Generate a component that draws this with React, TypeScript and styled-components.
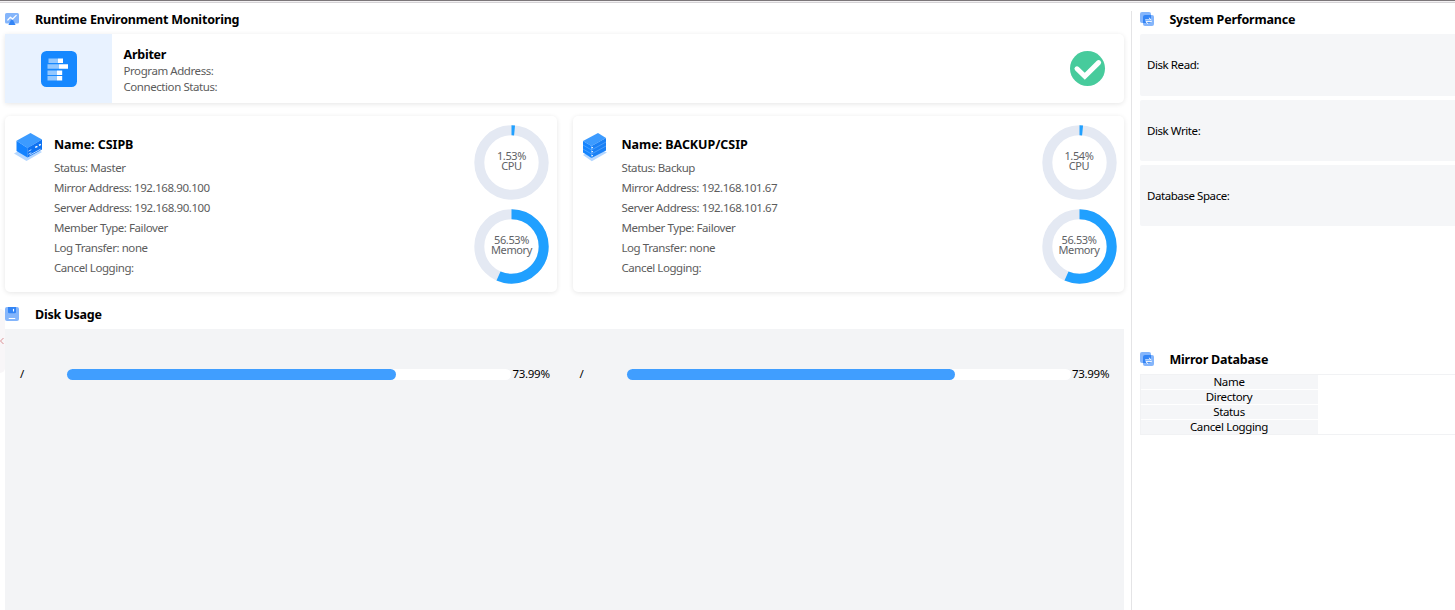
import React from 'react';
import styled, { createGlobalStyle } from 'styled-components';

const GlobalStyle = createGlobalStyle`
  * { box-sizing: border-box; }
  body {
    margin: 0;
    overflow: hidden;
    background: #fff;
    color: #000;
    font-family: "Noto Sans", "Open Sans", sans-serif;
    font-size: 11.5px;
  }
`;

const Page = styled.div`
  position: relative;
  display: flex;
  flex-direction: column;
  height: 610px;
  overflow: hidden;
`;

const TopEdge = styled.div`
  flex: none;
  height: 3px;
  background: linear-gradient(#7b7679 0 1px, #f3f1f3 1px 2px, #d5d3d6 2px 3px);
`;

const Columns = styled.div`
  flex: 1;
  display: flex;
  padding-top: 8px;
`;

const MainColumn = styled.main`
  width: 1131px;
  padding: 0 7px 0 5px;
  display: flex;
  flex-direction: column;
`;

const SideColumn = styled.aside`
  flex: 1;
  border-left: 1px solid #e4e4e6;
  padding-left: 8px;
`;

const SectionTitle = styled.h2<{ $above?: number; $below?: number; $gap?: number }>`
  flex: none;
  display: flex;
  align-items: center;
  gap: ${(p) => p.$gap ?? 16}px;
  padding: ${(p) => p.$above ?? 0}px 0 ${(p) => p.$below ?? 0}px;
  margin: 0;
  font-size: 12.5px;
  line-height: 17px;
  font-weight: 700;
  letter-spacing: -0.2px;
  white-space: nowrap;
  svg { flex: none; display: block; margin-bottom: 1px; }
`;

const Card = styled.section`
  display: flex;
  background: #fff;
  border-radius: 5px;
  box-shadow: 0 1px 5px rgba(0, 0, 0, 0.1);
`;

const ArbiterCard = styled(Card)`
  flex: none;
  height: 69px;
  margin-bottom: 13px;
  align-items: center;
  border-radius: 0 5px 5px 0;
`;

const ArbiterBadge = styled.div`
  width: 107px;
  height: 69px;
  display: flex;
  align-items: center;
  justify-content: center;
  background: #e8f2ff;
`;

const ArbiterInfo = styled.div`
  flex: 1;
  padding: 4px 0 0 11.5px;
  line-height: 16px;
  color: #5c5c5c;
  letter-spacing: -0.43px;
`;

const ArbiterName = styled.div`
  font-size: 12.5px;
  line-height: 17px;
  font-weight: 700;
  letter-spacing: -0.25px;
  color: #000;
`;

const StatusMark = styled.div`
  margin-right: 18px;
  height: 36px;
  svg { display: block; }
`;

const Members = styled.div`
  flex: none;
  display: grid;
  grid-template-columns: 551.5px 551.5px;
  gap: 16px;
  height: 176px;
`;

const MemberIcon = styled.div`
  flex: none;
  width: 49px;
  padding: 15px 0 0 9px;
  svg { display: block; }
`;

const MemberInfo = styled.div`
  flex: 1;
  padding-top: 18px;
  line-height: 20px;
  color: #5c5c5c;
  letter-spacing: -0.43px;
  white-space: nowrap;
`;

const MemberName = styled.div`
  height: 24px;
  line-height: 21px;
  font-size: 12.5px;
  font-weight: 700;
  letter-spacing: -0.05px;
  color: #000;
`;

const Gauges = styled.div`
  flex: none;
  width: 75px;
  margin-right: 7.5px;
  padding-top: 9px;
  display: flex;
  flex-direction: column;
  gap: 9px;
`;

const GaugeFrame = styled.div`
  display: grid;
  width: 75px;
  height: 75px;
  > * { grid-area: 1 / 1; }
  svg { display: block; }
`;

const GaugeLabel = styled.div`
  align-self: center;
  padding-bottom: 4px;
  text-align: center;
  line-height: 10px;
  font-size: 11px;
  letter-spacing: -0.38px;
  color: #606266;
  white-space: nowrap;
`;

const DiskPanel = styled.section`
  flex: 1;
  display: grid;
  grid-template-columns: 559.5px 559.5px;
  align-content: start;
  padding-top: 37px;
  background: #f3f4f6;
`;

const DiskRow = styled.div`
  display: flex;
  align-items: center;
  height: 16px;
  padding-left: 15px;
`;

const DiskPath = styled.span`
  width: 47px;
  padding-bottom: 1px;
`;

const Track = styled.div`
  width: 444px;
  height: 11px;
  border-radius: 6px;
  background: #fff;
`;

const Fill = styled.div`
  height: 100%;
  border-radius: 6px;
  background: #409eff;
`;

const Percent = styled.span`
  margin-left: 1.5px;
  padding-bottom: 2px;
  letter-spacing: -0.3px;
`;

const MetricList = styled.div`
  display: grid;
  grid-template-rows: 62px 61px 61px;
  gap: 4px;
`;

const Metric = styled.div`
  display: flex;
  align-items: center;
  padding: 0 0 1px 7px;
  border-radius: 2px 0 0 2px;
  background: #f5f6f8;
  letter-spacing: -0.43px;
`;

const MirrorSection = styled.section`
  padding-top: 125px;
`;

const MirrorTable = styled.div`
  border: 1px solid #f1f2f4;
  border-right: 0;
  height: 61px;
`;

const MirrorRow = styled.div`
  width: 177px;
  height: 14px;
  margin-bottom: 1px;
  padding-right: 1px;
  line-height: 14px;
  text-align: center;
  background: #f5f6f8;
  letter-spacing: -0.35px;
`;

const DrawerHandle = styled.div`
  position: absolute;
  left: 0;
  top: 309px;
  width: 5px;
  height: 64px;
  display: flex;
  align-items: center;
  background: #f8f6f8;
  border-radius: 0 5px 5px 0;
`;

const MonitorIcon = () => (
  <svg width="14" height="13" viewBox="0 0 14 13">
    <rect width="14" height="10.6" rx="1.6" fill="#84b5fb" />
    <path d="M3.4 12 5.8 7.6Q7 6 8.2 7.6L10.6 12Z" fill="#3385f6" />
    <path d="M2.8 7 5.4 4.2 7.6 6 11.2 2.4" fill="none" stroke="#fff" strokeWidth="1.2" strokeLinecap="round" strokeLinejoin="round" />
  </svg>
);

const DiskIcon = () => (
  <svg width="14" height="14" viewBox="0 0 14 14">
    <rect width="14" height="14" rx="2" fill="#84b5fb" />
    <path d="M3 0H11V5Q11 6.3 9.7 6.3H4.3Q3 6.3 3 5Z" fill="#3385f6" />
    <path d="M8.5 2.4V4" stroke="#fff" strokeWidth="1.1" strokeLinecap="round" />
    <path d="M4.2 11.5H9.8" stroke="#fff" strokeWidth="1.1" strokeLinecap="round" />
  </svg>
);

const SwapIcon = () => (
  <svg width="14" height="14" viewBox="0 0 14 14">
    <rect width="11" height="11" rx="2" fill="#84b5fb" />
    <rect x="3" y="3" width="11" height="11" rx="2" fill="#84b5fb" />
    <path d="M3 5Q3 3 5 3H11V9Q11 11 9 11H3Z" fill="#3385f6" />
    <path d="M5.6 7.9H11.2L9.2 6M11.4 9.6H5.8L7.8 11.5" fill="none" stroke="#fff" strokeWidth="1" strokeLinejoin="round" strokeLinecap="round" />
  </svg>
);

const ArbiterIcon = () => (
  <svg width="36" height="36" viewBox="0 0 36 36">
    <rect width="36" height="36" rx="5.5" fill="#1688ff" />
    <path d="M7.5 7.5H17V12H7.5ZM6.5 13.2H18V17.7H6.5ZM6.5 19.5H16V24H6.5ZM6.5 24.9H16V29.4H6.5Z" fill="#93c8ff" />
    <path d="M17 7.5H22V12H17ZM18 13.2H27V17.7H18ZM16 19.5H21.2V24H16ZM16 24.9H21.2V29.4H16Z" fill="#fff" />
  </svg>
);

const CheckIcon = () => (
  <svg width="36" height="36" viewBox="0 0 36 36">
    <circle cx="17.5" cy="17.5" r="17.5" fill="#47cb9c" />
    <path d="M7 17.8 14.8 25.2 28.6 11.6" fill="none" stroke="#fff" strokeWidth="5" strokeLinecap="round" />
  </svg>
);

const MasterIcon = () => (
  <svg width="30" height="31" viewBox="0 0 30 31">
    <path d="M0 22.5 15 14 28 21 12.5 30Z" fill="#b5d7ff" />
    <path d="M2.5 9.8 16.5 2 28 8.6 13.5 17Z" fill="#3c9bff" />
    <path d="M2.5 9.8 13.5 17V26.5L2.5 20Z" fill="#1483ff" />
    <path d="M13.5 17 28 8.6V18.5L13.5 26.5Z" fill="#0d72f2" />
    <path d="M14.5 20.2 17.3 18.7M14.5 23.2 17.3 21.7M15.6 24.2 26.6 18.2" stroke="#c9e2ff" strokeWidth=".9" />
    <path d="M21.2 16.4 23.4 15.3M25 14.3 26.8 13.3" stroke="#fff" strokeWidth="1.5" />
  </svg>
);

const BackupIcon = () => (
  <svg width="30" height="31" viewBox="0 0 30 31">
    <path d="M1 24 14 17 25 21.5 9.8 30.3Z" fill="#b5d7ff" />
    <path d="M1 10 16 2 24 7 9.5 15Z" fill="#3c9bff" />
    <path d="M1 10 9.5 15V27L1 21.5Z" fill="#1585ff" />
    <path d="M9.5 15 24 7V19.5L9.5 27Z" fill="#1a80f5" />
    <path d="M1 14 9.5 19 24 11M1 18 9.5 23 24 15" fill="none" stroke="#72b6ff" strokeOpacity=".75" strokeWidth=".7" />
    <path d="M10.2 16v1.2M10.2 20v1.2M10.2 24v1.2" stroke="#fff" strokeWidth="1.3" />
  </svg>
);

const Gauge = ({ value, name }: { value: number; name: string }) => {
  const length = 2 * Math.PI * 32.2;
  return (
    <GaugeFrame>
      <svg width="75" height="75" viewBox="0 0 75 75">
        <circle cx="37.5" cy="37.5" r="32.2" fill="none" stroke="#e4e9f3" strokeWidth="10" />
        <circle
          cx="37.5"
          cy="37.5"
          r="32.2"
          fill="none"
          stroke="#20a0ff"
          strokeWidth="10"
          strokeDasharray={`${(length * value) / 100} ${length}`}
          transform="rotate(-90 37.5 37.5)"
        />
      </svg>
      <GaugeLabel>
        {value}%<br />
        {name}
      </GaugeLabel>
    </GaugeFrame>
  );
};

interface Member {
  name: string;
  status: string;
  address: string;
  cpu: number;
  icon: React.ReactNode;
}

const members: Member[] = [
  { name: 'CSIPB', status: 'Master', address: '192.168.90.100', cpu: 1.53, icon: <MasterIcon /> },
  { name: 'BACKUP/CSIP', status: 'Backup', address: '192.168.101.67', cpu: 1.54, icon: <BackupIcon /> },
];

const disks = [73.99, 73.99];

export default function App() {
  return (
    <>
      <GlobalStyle />
      <Page>
        <TopEdge />
        <Columns>
          <MainColumn>
            <SectionTitle $below={6}>
              <MonitorIcon />
              <span>Runtime Environment Monitoring</span>
            </SectionTitle>
            <ArbiterCard>
              <ArbiterBadge>
                <ArbiterIcon />
              </ArbiterBadge>
              <ArbiterInfo>
                <ArbiterName>Arbiter</ArbiterName>
                <div>Program Address:</div>
                <div>Connection Status:</div>
              </ArbiterInfo>
              <StatusMark>
                <CheckIcon />
              </StatusMark>
            </ArbiterCard>
            <Members>
              {members.map((m) => (
                <Card key={m.name}>
                  <MemberIcon>{m.icon}</MemberIcon>
                  <MemberInfo>
                    <MemberName>Name: {m.name}</MemberName>
                    <div>Status: {m.status}</div>
                    <div>Mirror Address: {m.address}</div>
                    <div>Server Address: {m.address}</div>
                    <div>Member Type: Failover</div>
                    <div>Log Transfer: none</div>
                    <div>Cancel Logging:</div>
                  </MemberInfo>
                  <Gauges>
                    <Gauge value={m.cpu} name="CPU" />
                    <Gauge value={56.53} name="Memory" />
                  </Gauges>
                </Card>
              ))}
            </Members>
            <SectionTitle $above={14} $below={6}>
              <DiskIcon />
              <span>Disk Usage</span>
            </SectionTitle>
            <DiskPanel>
              {disks.map((used, i) => (
                <DiskRow key={i}>
                  <DiskPath>/</DiskPath>
                  <Track>
                    <Fill style={{ width: `${used}%` }} />
                  </Track>
                  <Percent>{used}%</Percent>
                </DiskRow>
              ))}
            </DiskPanel>
          </MainColumn>
          <SideColumn>
            <SectionTitle $below={6} $gap={15.4}>
              <SwapIcon />
              <span>System Performance</span>
            </SectionTitle>
            <MetricList>
              <Metric>Disk Read:</Metric>
              <Metric>Disk Write:</Metric>
              <Metric>Database Space:</Metric>
            </MetricList>
            <MirrorSection>
              <SectionTitle $below={6} $gap={15.4}>
                <SwapIcon />
                <span>Mirror Database</span>
              </SectionTitle>
              <MirrorTable>
                <MirrorRow>Name</MirrorRow>
                <MirrorRow>Directory</MirrorRow>
                <MirrorRow>Status</MirrorRow>
                <MirrorRow>Cancel Logging</MirrorRow>
              </MirrorTable>
            </MirrorSection>
          </SideColumn>
        </Columns>
        <DrawerHandle>
          <svg width="4" height="8" viewBox="0 0 4 8">
            <path d="M3.5 1 .5 4 3.5 7" fill="none" stroke="#d98f94" strokeWidth="1" />
          </svg>
        </DrawerHandle>
      </Page>
    </>
  );
}
